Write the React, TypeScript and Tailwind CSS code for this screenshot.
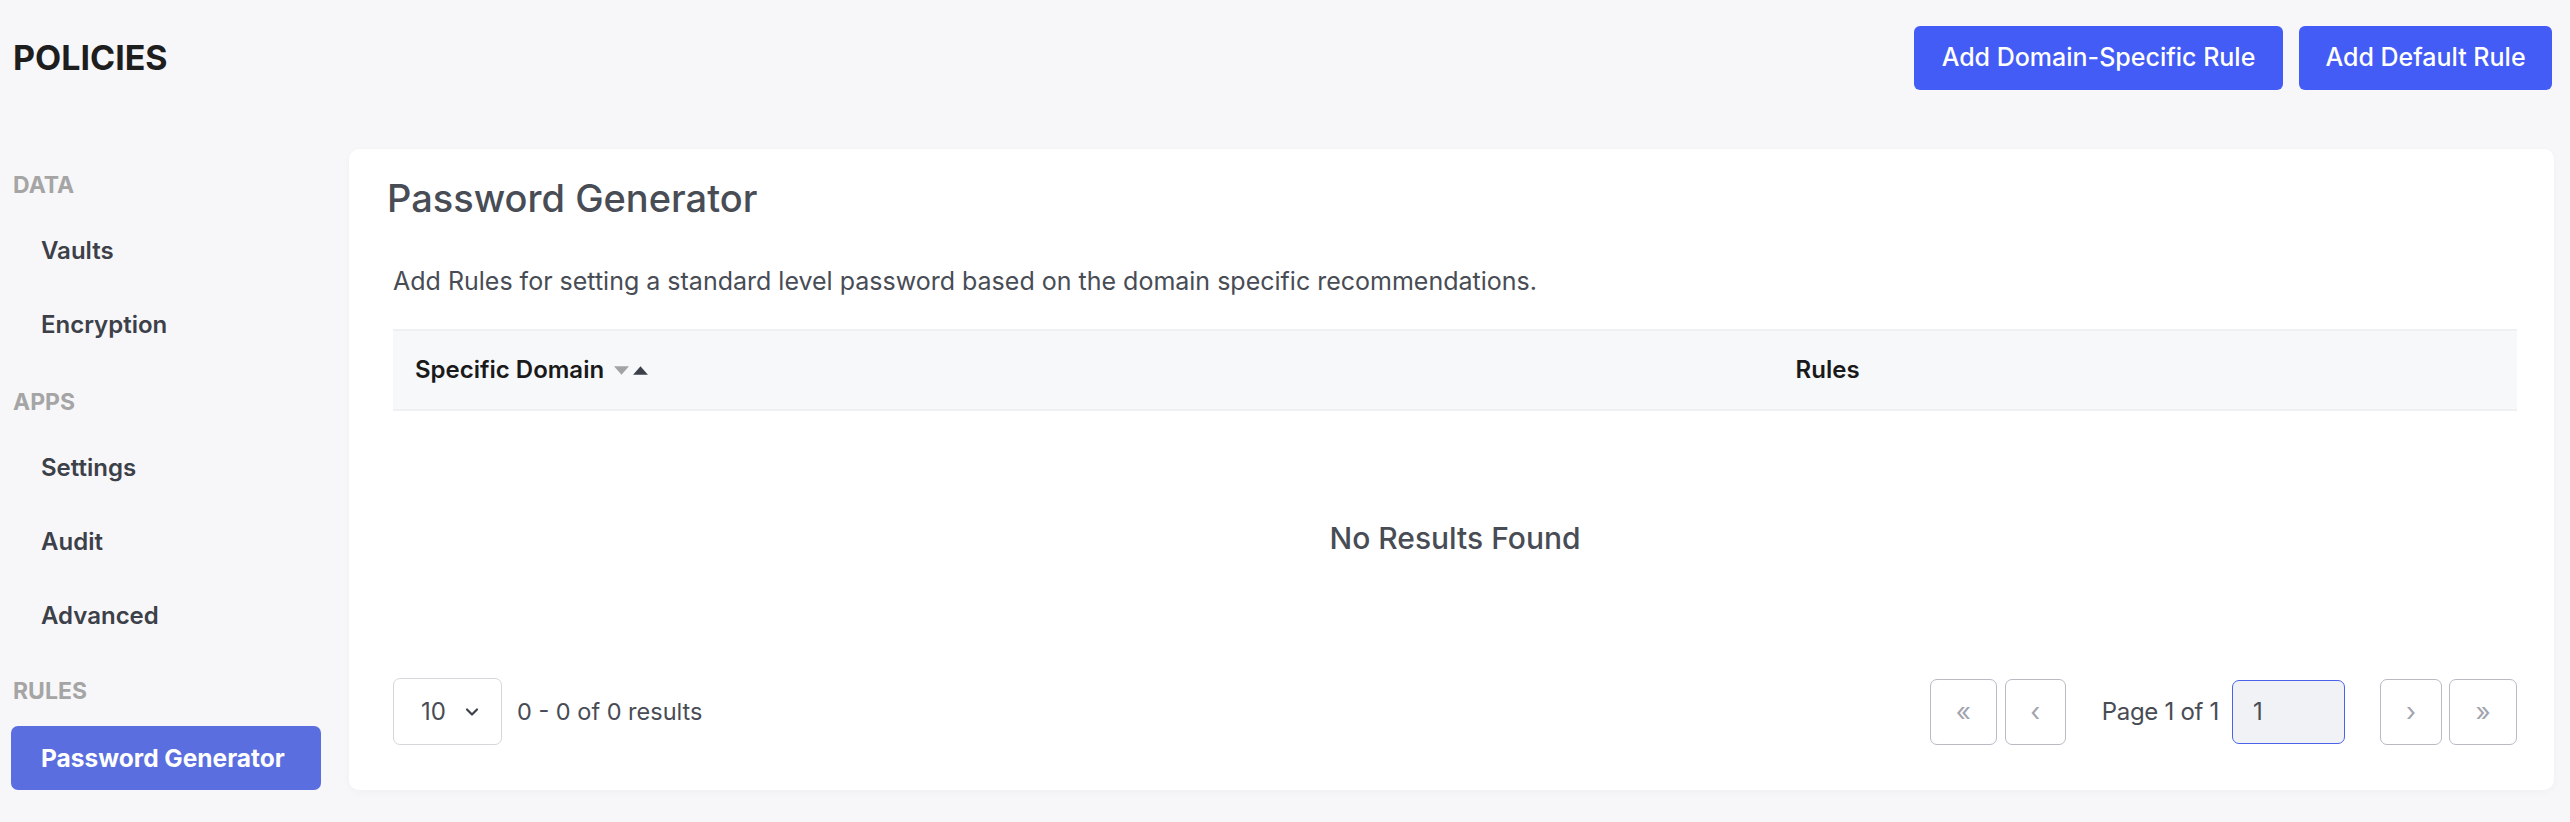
import React from 'react';
import { ChevronDown } from 'lucide-react';

const font = { fontFamily: 'Inter, "Noto Sans", sans-serif' };

const SectionLabel = ({ children, className = '' }: { children: React.ReactNode; className?: string }) => (
  <div className={`h-[44px] flex items-center pl-[2px] text-[23px] font-bold text-[#a5a5a5] ${className}`}>
    {children}
  </div>
);

const NavItem = ({ label }: { label: string }) => (
  <div className="h-[74px] flex items-center pl-[30px] text-[24px] font-semibold text-[#3c4048]">{label}</div>
);

const PageButton = ({ glyph, className = '' }: { glyph: string; className?: string }) => (
  <button
    className={`h-[66px] flex items-center justify-center rounded-[7px] border border-[#b9bac3] bg-white text-[26px] text-[#a2a4ae] ${className}`}
  >
    {glyph}
  </button>
);

export default function App() {
  return (
    <div className="min-h-screen w-full bg-[#f7f7fa]" style={font}>
      {/* top bar */}
      <div className="flex items-center justify-between pt-[26px] pl-[13px] pr-[18px]">
        <h1 className="text-[34px] font-bold text-[#1e1e1e] leading-none">POLICIES</h1>
        <div className="flex gap-[16px]">
          <button className="h-[64px] w-[369px] rounded-[6px] bg-[#435cf6] text-[25px] font-medium text-white">
            Add Domain-Specific Rule
          </button>
          <button className="h-[64px] w-[253px] rounded-[6px] bg-[#435cf6] text-[25px] font-medium text-white">
            Add Default Rule
          </button>
        </div>
      </div>

      <div className="flex gap-[28px] mt-[59px] pl-[11px] pr-[16px]">
        {/* sidebar */}
        <nav className="w-[310px] shrink-0 pt-[14px]">
          <SectionLabel className="mb-[7px]">DATA</SectionLabel>
          <NavItem label="Vaults" />
          <NavItem label="Encryption" />
          <SectionLabel className="mt-[18px] mb-[7px]">APPS</SectionLabel>
          <NavItem label="Settings" />
          <NavItem label="Audit" />
          <NavItem label="Advanced" />
          <SectionLabel className="mt-[16px]">RULES</SectionLabel>
          <div className="mt-[13px] h-[64px] flex items-center pl-[30px] rounded-[7px] bg-[#5a6ee0] text-[24.5px] font-bold text-white">
            Password Generator
          </div>
        </nav>

        {/* card */}
        <div className="flex-1 rounded-[10px] bg-white pt-[24px] pb-[42px] pl-[44px] pr-[37px] shadow-[0_2px_10px_rgba(0,0,0,0.03)]">
          <h2 className="-ml-[6px] h-[50px] flex items-center text-[38px] font-medium text-[#484c55]">
            Password Generator
          </h2>
          <p className="mt-[43px] h-[32px] flex items-center text-[25px] text-[#484c55]">
            Add Rules for setting a standard level password based on the domain specific recommendations.
          </p>

          <div className="mt-[31px] h-[82px] flex items-center bg-[#f7f8fa] border-y-2 border-[#eff0f4] text-[24px] font-semibold text-[#1a1a1a]">
            <div className="w-[65%] pl-[22px] flex items-center gap-[9px]">
              <span>Specific Domain</span>
              <span className="flex items-center gap-[2px]">
                <svg width="17" height="11" viewBox="0 0 16 10">
                  <path d="M1 1h14L8 9z" fill="#a3a3a3" />
                </svg>
                <svg width="17" height="11" viewBox="0 0 16 10">
                  <path d="M1 9h14L8 1z" fill="#3c4048" />
                </svg>
              </span>
            </div>
            <div className="pl-[22px]">Rules</div>
          </div>

          <div className="h-[254px] flex items-center justify-center text-[30px] font-medium text-[#484c55]">
            No Results Found
          </div>

          <div className="mt-[12px] h-[69px] flex items-center justify-between">
            <div className="flex items-center gap-[15px]">
              <div className="h-[67px] w-[109px] flex items-center pl-[27px] gap-[16px] rounded-[7px] border border-[#d5d7db] text-[24px] text-[#484c55]">
                <span>10</span>
                <ChevronDown size={20} strokeWidth={2.6} color="#3c4048" />
              </div>
              <span className="text-[23.5px] text-[#484c55]">0 - 0 of 0 results</span>
            </div>

            <div className="flex items-center">
              <PageButton glyph="«" className="w-[67px]" />
              <PageButton glyph="‹" className="w-[61px] ml-[8px]" />
              <span className="ml-[36px] text-[24px] text-[#484c55] tracking-[-0.3px]">Page 1 of 1</span>
              <div className="ml-[13px] h-[64px] w-[113px] flex items-center pl-[20px] rounded-[7px] border border-[#4a63ea] bg-[#f1f2f6] text-[24px] text-[#484c55]">
                1
              </div>
              <PageButton glyph="›" className="w-[62px] ml-[35px]" />
              <PageButton glyph="»" className="w-[68px] ml-[7px]" />
            </div>
          </div>
        </div>
      </div>
    </div>
  );
}
